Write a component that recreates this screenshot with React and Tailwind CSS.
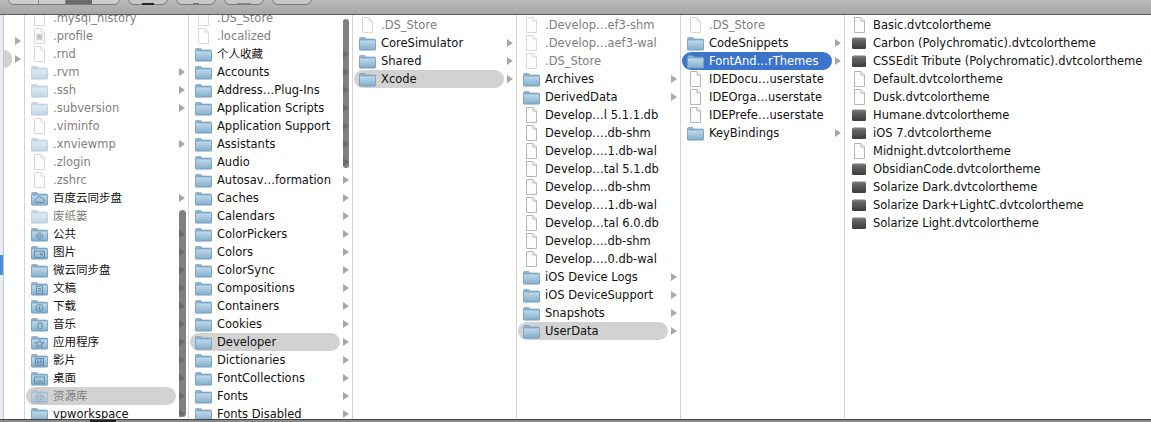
const FONT = "font-['DejaVu_Sans','Noto_Sans_CJK_SC',sans-serif]"

// kinds: d = folder, f = file, t = dark theme file, x = exec; dim = hidden file
const col1 = [
  { n: '.mysql_history', k: 'f', dim: true },
  { n: '.profile', k: 'x', dim: true },
  { n: '.rnd', k: 'f', dim: true },
  { n: '.rvm', k: 'd', dim: true },
  { n: '.ssh', k: 'd', dim: true },
  { n: '.subversion', k: 'd', dim: true },
  { n: '.viminfo', k: 'f', dim: true },
  { n: '.xnviewmp', k: 'd', dim: true },
  { n: '.zlogin', k: 'f', dim: true },
  { n: '.zshrc', k: 'f', dim: true },
  { n: '百度云同步盘', k: 'd', mark: 'cloud' },
  { n: '废纸篓', k: 'd', dim: true, noArrow: true },
  { n: '公共', k: 'd', mark: 'diamond' },
  { n: '图片', k: 'd', mark: 'photo' },
  { n: '微云同步盘', k: 'd' },
  { n: '文稿', k: 'd', mark: 'doc' },
  { n: '下载', k: 'd', mark: 'down' },
  { n: '音乐', k: 'd', mark: 'music' },
  { n: '应用程序', k: 'd', mark: 'star' },
  { n: '影片', k: 'd', mark: 'film' },
  { n: '桌面', k: 'd', mark: 'desk' },
  { n: '资源库', k: 'd', dim: true, sel: true, mark: 'lib' },
  { n: 'vpworkspace', k: 'd' },
]

const col2 = [
  { n: '.DS_Store', k: 'f', dim: true },
  { n: '.localized', k: 'f', dim: true },
  { n: '个人收藏', k: 'd' },
  { n: 'Accounts', k: 'd' },
  { n: 'Address…Plug-Ins', k: 'd' },
  { n: 'Application Scripts', k: 'd' },
  { n: 'Application Support', k: 'd' },
  { n: 'Assistants', k: 'd' },
  { n: 'Audio', k: 'd' },
  { n: 'Autosav…formation', k: 'd' },
  { n: 'Caches', k: 'd' },
  { n: 'Calendars', k: 'd' },
  { n: 'ColorPickers', k: 'd' },
  { n: 'Colors', k: 'd' },
  { n: 'ColorSync', k: 'd' },
  { n: 'Compositions', k: 'd' },
  { n: 'Containers', k: 'd' },
  { n: 'Cookies', k: 'd' },
  { n: 'Developer', k: 'd', sel: true },
  { n: 'Dictionaries', k: 'd' },
  { n: 'FontCollections', k: 'd' },
  { n: 'Fonts', k: 'd' },
  { n: 'Fonts Disabled', k: 'd' },
]

const col3 = [
  { n: '.DS_Store', k: 'f', dim: true },
  { n: 'CoreSimulator', k: 'd' },
  { n: 'Shared', k: 'd' },
  { n: 'Xcode', k: 'd', sel: true },
]

const col4 = [
  { n: '.Develop…ef3-shm', k: 'f', dim: true },
  { n: '.Develop…aef3-wal', k: 'f', dim: true },
  { n: '.DS_Store', k: 'f', dim: true },
  { n: 'Archives', k: 'd' },
  { n: 'DerivedData', k: 'd' },
  { n: 'Develop…l 5.1.1.db', k: 'f' },
  { n: 'Develop….db-shm', k: 'f' },
  { n: 'Develop….1.db-wal', k: 'f' },
  { n: 'Develop…tal 5.1.db', k: 'f' },
  { n: 'Develop….db-shm', k: 'f' },
  { n: 'Develop….1.db-wal', k: 'f' },
  { n: 'Develop…tal 6.0.db', k: 'f' },
  { n: 'Develop….db-shm', k: 'f' },
  { n: 'Develop….0.db-wal', k: 'f' },
  { n: 'iOS Device Logs', k: 'd' },
  { n: 'iOS DeviceSupport', k: 'd' },
  { n: 'Snapshots', k: 'd' },
  { n: 'UserData', k: 'd', sel: true },
]

const col5 = [
  { n: '.DS_Store', k: 'f', dim: true },
  { n: 'CodeSnippets', k: 'd' },
  { n: 'FontAnd…rThemes', k: 'd', active: true },
  { n: 'IDEDocu…userstate', k: 'f' },
  { n: 'IDEOrga…userstate', k: 'f' },
  { n: 'IDEPrefe…userstate', k: 'f' },
  { n: 'KeyBindings', k: 'd' },
]

const col6 = [
  { n: 'Basic.dvtcolortheme', k: 'f' },
  { n: 'Carbon (Polychromatic).dvtcolortheme', k: 't' },
  { n: 'CSSEdit Tribute (Polychromatic).dvtcolortheme', k: 't' },
  { n: 'Default.dvtcolortheme', k: 'f' },
  { n: 'Dusk.dvtcolortheme', k: 'f' },
  { n: 'Humane.dvtcolortheme', k: 't' },
  { n: 'iOS 7.dvtcolortheme', k: 't' },
  { n: 'Midnight.dvtcolortheme', k: 'f' },
  { n: 'ObsidianCode.dvtcolortheme', k: 't' },
  { n: 'Solarize Dark.dvtcolortheme', k: 't' },
  { n: 'Solarize Dark+LightC.dvtcolortheme', k: 't' },
  { n: 'Solarize Light.dvtcolortheme', k: 't' },
]

function Gradients() {
  return (
    <svg className="block w-0 h-0">
      <defs>
        <linearGradient id="folderBody" x1="0" y1="0" x2="0" y2="1">
          <stop offset="0" stopColor="#c3dbea" />
          <stop offset="1" stopColor="#82aecd" />
        </linearGradient>
        <linearGradient id="themeBody" x1="0" y1="0" x2="0" y2="1">
          <stop offset="0" stopColor="#7c867d" />
          <stop offset="0.3" stopColor="#606060" />
          <stop offset="1" stopColor="#3c3c3c" />
        </linearGradient>
      </defs>
    </svg>
  )
}

function FolderMark({ mark }) {
  const c = '#5f8eb0'
  if (mark === 'cloud') return <path d="M5 12.5a2 2 0 0 1 .5-3.8 3 3 0 0 1 5.6-.4 2.2 2.2 0 0 1 1 4.2z" fill="none" stroke={c} strokeWidth="1" />
  if (mark === 'diamond') return <g fill="none" stroke={c}><path d="M8.5 6l3.8 3.8-3.8 3.8-3.8-3.8z" /><circle cx="8.5" cy="9.8" r="1.1" /></g>
  if (mark === 'photo') return <g fill="none" stroke={c}><rect x="3.5" y="7" width="10" height="6.5" /><circle cx="10.5" cy="10" r="1.2" /></g>
  if (mark === 'doc') return <g fill="none" stroke={c}><rect x="5.5" y="6" width="6" height="8" /><path d="M7 8.5h3M7 10.5h3" /></g>
  if (mark === 'down') return <g fill="none" stroke={c}><circle cx="8.5" cy="10" r="3.6" /><path d="M8.5 7.8v4M7 10.4l1.5 1.6L10 10.4" /></g>
  if (mark === 'music') return <path d="M7 13V7h4v5.5M5.5 13H7M9.5 12.5H11" fill="none" stroke={c} />
  if (mark === 'star') return <path d="M8.5 5.8l1.3 2.8h3l-2.4 1.9.9 3-2.8-1.7-2.8 1.7.9-3-2.4-1.9h3z" fill="none" stroke={c} />
  if (mark === 'film') return <g fill="none" stroke={c}><rect x="4.5" y="6.5" width="8" height="7" /><path d="M7 6.5v7M10 6.5v7M4.5 10h8" /></g>
  if (mark === 'desk') return <g fill="none" stroke={c}><rect x="3.5" y="7" width="10" height="6" /><path d="M5.5 11h6" /></g>
  if (mark === 'lib') return <path d="M4 13.5h9M5 12V9.5M7.5 12V9.5M10 12V9.5M12.5 12V9.5M4 8.5l4.5-2.5 4.5 2.5z" fill="none" stroke="#5f8eb0" />
  return null
}

function Icon({ kind, mark, dim }) {
  const cls = 'block shrink-0 w-[17px] h-[16px]' + (dim ? ' opacity-50' : '')
  if (kind === 'd') {
    return (
      <svg viewBox="0 0 17 16" className={cls}>
        <path d="M0.5 3.5q0-1 1-1h4.5l1 1.5h8.5q1 0 1 1v9q0 1-1 1h-14q-1 0-1-1z" fill="#8db3cf" stroke="#6f9bbd" strokeWidth="0.6" />
        <rect x="0.5" y="5" width="16" height="10" rx="0.8" fill="url(#folderBody)" stroke="#6d98ba" strokeWidth="0.6" />
        <FolderMark mark={mark} />
      </svg>
    )
  }
  if (kind === 't') {
    return (
      <svg viewBox="0 0 17 16" className="block shrink-0 w-[17px] h-[16px]">
        <rect x="1" y="2.5" width="14" height="11.5" rx="1.5" fill="url(#themeBody)" />
      </svg>
    )
  }
  return (
    <svg viewBox="0 0 17 16" className={cls}>
      <path d="M3.5 0.5h6.5l3.5 3.5v11.5h-10z" fill="#fdfdfd" stroke="#b4b4b4" />
      <path d="M10 0.5v3.5h3.5" fill="#f0f0f0" stroke="#b4b4b4" />
      {kind === 'x' && <rect x="5.5" y="6" width="6" height="6" fill="#8a8a8a" stroke="#cccccc" />}
    </svg>
  )
}

function Arrow() {
  return (
    <svg viewBox="0 0 6 8" className="block shrink-0 w-[6px] h-[8px]">
      <path d="M0 0l6 4-6 4z" fill="#a6a6a6" />
    </svg>
  )
}

function Row({ item, wide }) {
  let pill = ''
  if (item.sel) pill = ' bg-[#d2d2d2]'
  if (item.active) pill = ' bg-[#3d74cb]'
  let text = 'text-[#111]'
  if (item.dim) text = 'text-[#808080]'
  if (item.active) text = 'text-white'
  return (
    <div className="flex items-center h-[18px]">
      <div className={'flex items-center h-[18px] rounded-full pl-[5px] ml-px ' + (wide ? 'flex-1' : 'w-[150px]') + pill}>
        <Icon kind={item.k} mark={item.mark} dim={item.dim} />
        <span className={'ml-[5px] text-[11.5px] leading-[18px] whitespace-nowrap ' + text}>{item.n}</span>
      </div>
      {item.k === 'd' && !item.noArrow && <div className="ml-[3px]"><Arrow /></div>}
    </div>
  )
}

function Column({ items, top, scroll, wide }) {
  return (
    <div className={'relative overflow-hidden ' + (wide ? 'flex-1' : 'w-[164px] shrink-0 border-r border-[#d4d4d4]')}>
      <div className={top}>
        {items.map((item, i) => <Row key={i} item={item} wide={wide} />)}
      </div>
      {scroll}
    </div>
  )
}

function ToolButton({ className, children }) {
  return (
    <div className={'h-[20px] rounded-b-[6px] border border-[#7a7a7a] bg-gradient-to-b from-[#d0d0d0] to-[#c6c6c6] flex justify-center ' + className}>
      {children}
    </div>
  )
}

export default function App() {
  return (
    <div className={'flex flex-col w-[1151px] h-[422px] overflow-hidden bg-white ' + FONT}>
      {/* toolbar, cut off by the top of the crop */}
      <div className="h-[15px] shrink-0 flex items-end pb-[9px] pl-[8px] overflow-hidden border-b border-[#5a5a5a] bg-gradient-to-b from-[#b8b8b8] to-[#a6a6a6]">
        <div className="flex h-[20px] w-[112px] rounded-b-[6px] border border-[#7a7a7a] overflow-hidden shrink-0">
          <div className="w-[30px] border-r border-[#858585] bg-[#cccccc]" />
          <div className="w-[27px] border-r border-[#858585] bg-[#cccccc]" />
          <div className="w-[26px] border-r border-[#666] bg-[#6c6c6c]" />
          <div className="flex-1 bg-[#cccccc]" />
        </div>
        <ToolButton className="w-[40px] ml-[8px]"><div className="mt-[17px] w-[12px] h-[2px] bg-[#222]" /></ToolButton>
        <ToolButton className="w-[40px] ml-[8px]"><div className="mt-[17px] w-[6px] h-[1px] bg-[#777]" /></ToolButton>
        <ToolButton className="w-[40px] ml-[8px]"><div className="mt-[17px] w-[14px] h-[1px] bg-[#888]" /></ToolButton>
        <ToolButton className="w-[40px] ml-[8px]" />
      </div>

      <div className="flex flex-1 min-h-0 overflow-hidden">
        {/* sliver of the sidebar */}
        <div className="w-[4px] shrink-0 flex flex-col border-r border-[#c6c6c6] bg-[#e6edf5]">
          <div className="h-[240px]" />
          <div className="h-[20px] bg-[#4a90d9]" />
        </div>

        {/* column cut off on the left */}
        <div className="w-[21px] shrink-0 pt-[17px] border-r border-[#d4d4d4]">
          <div className="flex items-center h-[18px] pl-[11px]"><Arrow /></div>
          <div className="flex items-center h-[18px]">
            <div className="w-[8px] h-[18px] rounded-r-full bg-[#d2d2d2]" />
            <div className="ml-[3px]"><Arrow /></div>
          </div>
        </div>

        <Column
          items={col1}
          top="-mt-[6px]"
          scroll={<div className="absolute left-[154px] top-[195px] w-[7px] h-[207px] rounded-full bg-[#555]/75" />}
        />
        <Column
          items={col2}
          top="-mt-[6px]"
          scroll={<div className="absolute left-[154px] top-[4px] w-[6px] h-[149px] rounded-full bg-[#555]/75" />}
        />
        <Column items={col3} top="mt-px" />
        <Column items={col4} top="mt-px" />
        <Column items={col5} top="mt-px" />
        <Column items={col6} top="mt-px" wide />
      </div>

      <div className="h-[3px] shrink-0 border-t border-[#444] bg-[#8a8a8a] flex pl-[90px]">
        <div className="w-[26px] bg-[#222]" />
      </div>
      <Gradients />
    </div>
  )
}
